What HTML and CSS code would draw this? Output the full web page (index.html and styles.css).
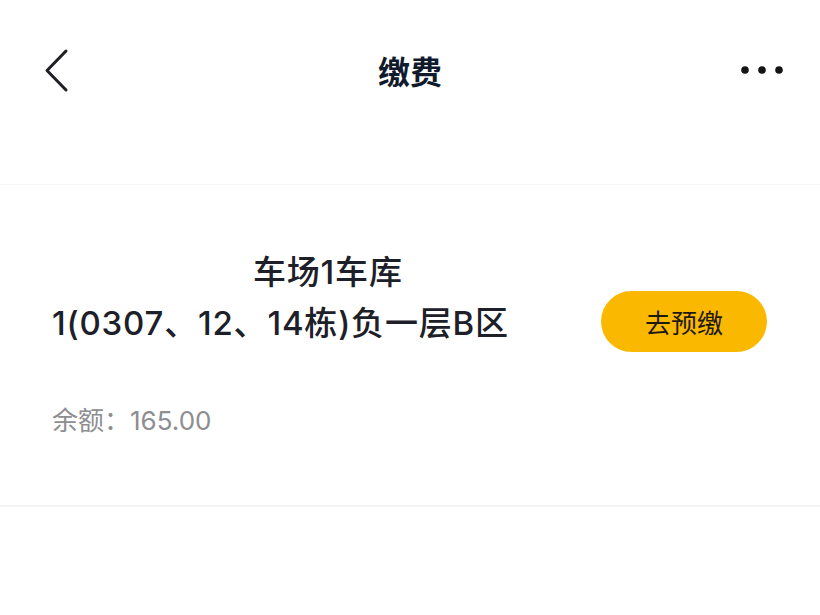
FILE: index.html
```html
<!DOCTYPE html>
<html lang="zh-CN">
<head>
    <meta charset="UTF-8">
    <meta name="viewport" content="width=device-width, initial-scale=1.0">
    <title>缴费</title>
    <link rel="stylesheet" href="styles.css">
</head>
<body>
    <div class="navbar">
        <div class="nav-back">
            <svg width="40" height="60" viewBox="0 0 40 60">
                <polyline points="30,11 11,30.5 30,50" fill="none" stroke="#1f1f24" stroke-width="3" stroke-linecap="round" stroke-linejoin="round"/>
            </svg>
        </div>
        <div class="nav-title">缴费</div>
        <div class="nav-more">
            <svg width="50" height="12" viewBox="0 0 50 12">
                <circle cx="11" cy="6" r="3.8" fill="#141414"/>
                <circle cx="28" cy="6" r="3.8" fill="#141414"/>
                <circle cx="45" cy="6" r="3.8" fill="#141414"/>
            </svg>
        </div>
    </div>
    <div class="nav-gap"></div>

    <div class="account-card">
        <div class="account-row">
            <div class="account-name">
                <span class="name-first">车场1车库</span>
                <span class="name-second">1(0307、12、14栋)负一层B区</span>
            </div>
            <button class="prepay-btn">去预缴</button>
        </div>
        <div class="balance">余额：165.00</div>
    </div>
</body>
</html>
```

FILE: styles.css
```css
body {
    margin: 0;
    background-color: #fff;
    font-family: "Inter", "Noto Sans CJK SC", "Noto Sans", sans-serif;
    color: #1c1f26;
}
.navbar {
    height: 140px;
    display: flex;
    align-items: center;
    justify-content: space-between;
    padding: 0 36px;
}
.nav-back svg,
.nav-more svg {
    display: block;
}
.nav-back {
    width: 90px;
}
.nav-more {
    width: 90px;
    display: flex;
    justify-content: flex-end;
}
.nav-title {
    font-size: 32px;
    font-weight: 700;
    color: #101a2c;
}
.nav-gap {
    height: 44px;
    border-bottom: 1px solid #f6f6f6;
}
.account-card {
    padding: 62px 53px 68px 52px;
    border-bottom: 2px solid #f4f4f4;
}
.account-row {
    display: flex;
    justify-content: space-between;
    align-items: flex-start;
}
.account-name {
    font-size: 33px;
    font-weight: 500;
    line-height: 51px;
    letter-spacing: 0.8px;
    color: #1d2028;
}
.account-name span {
    display: block;
}
.name-first {
    padding-left: 201px;
}
.prepay-btn {
    margin-top: 44px;
    width: 166px;
    height: 61px;
    border: none;
    border-radius: 31px;
    background-color: #fbb800;
    color: #1f1a10;
    font-family: "Noto Sans CJK SC", "Noto Sans", sans-serif;
    font-size: 26px;
    cursor: pointer;
}
.balance {
    margin-top: 53px;
    font-size: 26px;
    line-height: 32px;
    color: #8d8d92;
}
```
